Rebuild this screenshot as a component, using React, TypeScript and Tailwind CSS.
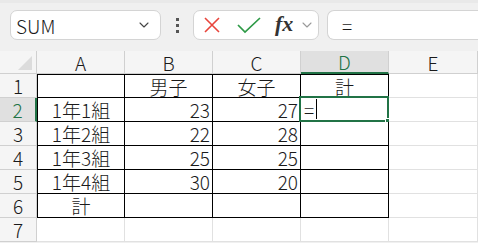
import { ChevronDown } from "lucide-react";

const cols = ["A", "B", "C", "D", "E"];

type Cell = { text?: string; align?: "left" | "center" | "right" };

const rows: Cell[][] = [
  [{}, { text: "男子", align: "center" }, { text: "女子", align: "center" }, { text: "計", align: "center" }],
  [{ text: "1年1組", align: "center" }, { text: "23", align: "right" }, { text: "27", align: "right" }, {}],
  [{ text: "1年2組", align: "center" }, { text: "22", align: "right" }, { text: "28", align: "right" }, {}],
  [{ text: "1年3組", align: "center" }, { text: "25", align: "right" }, { text: "25", align: "right" }, {}],
  [{ text: "1年4組", align: "center" }, { text: "30", align: "right" }, { text: "20", align: "right" }, {}],
  [{ text: "計", align: "center" }, {}, {}, {}],
];

const font = { fontFamily: '"Noto Sans CJK JP", "Liberation Sans", sans-serif' };

const App = () => {
  return (
    <div className="w-[478px] h-[243px] overflow-hidden bg-[#f0f0f0] font-light text-[19px] text-[#1a1a1a]" style={font}>
      {/* toolbar */}
      <div className="h-[51px] flex items-start pt-[7px] pl-[10px] border-t-[3px] border-[#e9e9e9]">
        <div className="w-[151px] h-[30px] bg-white border border-[#d4d4d4] rounded-[7px] flex items-center pl-[5px] pr-[8px] justify-between">
          <span className="leading-none">SUM</span>
          <ChevronDown size={16} strokeWidth={1.6} className="text-[#444]" />
        </div>
        <div className="w-[32px] h-[30px] flex flex-col items-center justify-center gap-[3px]">
          <div className="w-[3px] h-[3px] bg-[#555]" />
          <div className="w-[3px] h-[3px] bg-[#555]" />
          <div className="w-[3px] h-[3px] bg-[#555]" />
        </div>
        <div className="w-[126px] h-[30px] bg-white border border-[#d4d4d4] rounded-[7px] flex items-center pl-[9px]">
          <svg width="18" height="18" viewBox="0 0 18 18" className="mr-[16px]">
            <path d="M2 2 L16 16 M16 2 L2 16" stroke="#e8453c" strokeWidth="1.6" fill="none" />
          </svg>
          <svg width="24" height="18" viewBox="0 0 24 18" className="mr-[14px]">
            <path d="M1 9 L8 16 L23 2" stroke="#2e9a47" strokeWidth="1.7" fill="none" />
          </svg>
          <span className="italic font-bold text-[22px] leading-none text-[#333] -mt-[2px]" style={{ fontFamily: '"Liberation Serif", serif' }}>
            fx
          </span>
          <ChevronDown size={16} strokeWidth={1.6} className="text-[#999] ml-[6px]" />
        </div>
        <div className="flex-1 h-[30px] ml-[8px] bg-white border border-r-0 border-[#d4d4d4] rounded-l-[7px] flex items-center pl-[14px]">
          <span className="leading-none">=</span>
        </div>
      </div>

      {/* grid */}
      <div className="grid grid-cols-[37px_88px_88px_88px_88px_89px] grid-rows-[23px_repeat(7,24px)]">
        <div className="relative bg-[#f5f5f5] border-r border-b border-[#d0d0d0]">
          <div className="absolute right-[4px] bottom-[3px] w-0 h-0 border-l-[14px] border-l-transparent border-b-[14px] border-b-[#dcdcdc]" />
        </div>
        {cols.map((c) => (
          <div
            key={c}
            className={
              c === "D"
                ? "flex items-center justify-center bg-[#e0e0e0] border-r border-[#d0d0d0] border-b-2 border-b-[#217346] text-[#217346] leading-none"
                : "flex items-center justify-center bg-[#f5f5f5] border-r border-b border-[#d0d0d0] leading-none"
            }
          >
            {c}
          </div>
        ))}
        {Array.from({ length: 7 }).map((_, r) => (
          <Row key={r} index={r} />
        ))}
      </div>
    </div>
  );
};

const Row = ({ index }: { index: number }) => {
  const data = rows[index];
  const selectedRow = index === 1;
  return (
    <>
      <div
        className={
          selectedRow
            ? "flex items-center justify-center bg-[#e0e0e0] border-b border-[#d0d0d0] border-r-2 border-r-[#217346] text-[#217346] leading-none"
            : "flex items-center justify-center bg-[#f5f5f5] border-r border-b border-[#d0d0d0] leading-none"
        }
      >
        {index + 1}
      </div>
      {cols.map((c, ci) => {
        const cell = data ? data[ci] : undefined;
        const inTable = !!data && ci < 4;
        const selected = index === 1 && c === "D";
        const align =
          cell?.align === "right" ? "justify-end pr-[2px]" : cell?.align === "center" ? "justify-center" : "justify-start";
        return (
          <div
            key={c}
            className={
              "relative bg-white flex items-center leading-none " +
              align +
              (inTable
                ? " border-r border-b border-black" + (index === 0 ? " border-t border-t-black" : "") + (ci === 0 ? " border-l border-l-black" : "")
                : " border-r border-b border-[#e1e1e1]")
            }
          >
            {cell?.text}
            {selected && (
              <div className="absolute -left-[2px] -top-[2px] -right-[1px] -bottom-[1px] border-2 border-[#217346] flex items-center pl-[3px]">
                <span className="leading-none">=</span>
                <span className="w-px h-[20px] bg-black ml-[2px]" />
                <div className="absolute -right-[3px] -bottom-[3px] w-[5px] h-[5px] bg-[#217346] border border-white" />
              </div>
            )}
          </div>
        );
      })}
    </>
  );
};

export default App;
